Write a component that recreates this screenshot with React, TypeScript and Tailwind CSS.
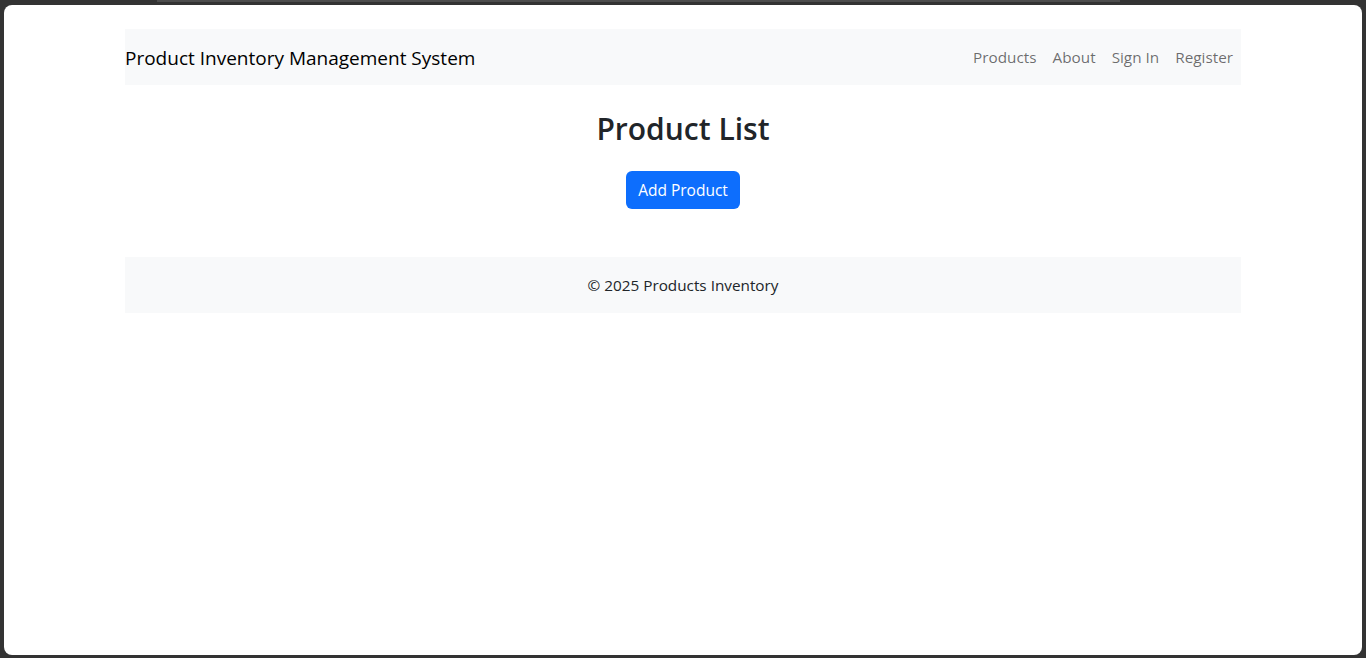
import React from "react";

export default function App() {
  const font = { fontFamily: '"Open Sans", "Noto Sans", sans-serif' };
  return (
    <div className="w-[1366px] h-[658px] bg-[#333333] flex flex-col overflow-hidden" style={font}>
      <div className="h-[5px] shrink-0 flex">
        <div className="ml-[157px] w-[963px] h-[2px] bg-[#4d4d4d]" />
      </div>
      <div className="mx-[4px] h-[650px] bg-white rounded-[8px] overflow-hidden">
        <div className="w-[1140px] mx-auto px-[12px]">
          <nav className="mt-[24px] h-[56px] bg-[#f8f9fa] flex items-center justify-between">
            <span className="text-[19px] leading-[30px] text-black pt-[2px]">Product Inventory Management System</span>
            <div className="flex items-center text-[15.3px] text-[rgba(0,0,0,0.58)] pt-[1px]">
              <span className="px-[8px]">Products</span>
              <span className="px-[8px]">About</span>
              <span className="px-[8px]">Sign In</span>
              <span className="px-[8px]">Register</span>
            </div>
          </nav>
          <h2 className="mt-[25px] mb-[23px] text-center text-[30px] leading-[38px] font-semibold text-[#212529]">Product List</h2>
          <div className="flex justify-center">
            <button className="h-[38px] px-[12px] rounded-[6px] bg-[#0d6efd] text-white text-[15.5px] leading-[24px]">Add Product</button>
          </div>
          <footer className="mt-[48px] h-[56px] bg-[#f8f9fa] flex items-center justify-center text-[15.3px] text-[#212529] pt-[1px]">
            © 2025 Products Inventory
          </footer>
        </div>
      </div>
    </div>
  );
}
